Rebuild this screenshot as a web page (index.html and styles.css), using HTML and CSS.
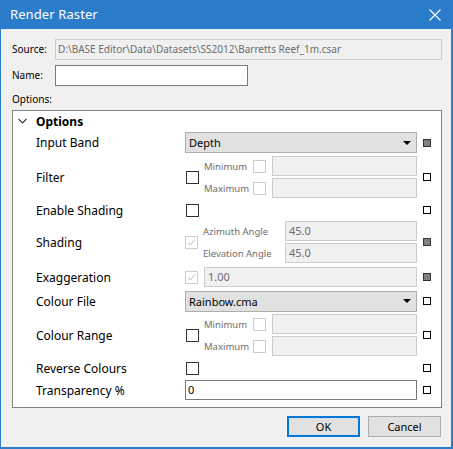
FILE: index.html
```html
<!DOCTYPE html>
<html>
<head>
<meta charset="utf-8">
<link rel="stylesheet" href="styles.css">
</head>
<body>
<div class="window">
  <div class="titlebar">
    <span class="title">Render Raster</span>
    <svg class="close" width="12" height="12" viewBox="0 0 12 12"><path d="M0.5 0.5 L11.5 11.5 M11.5 0.5 L0.5 11.5" stroke="#fff" stroke-width="1.1" fill="none"/></svg>
  </div>
  <div class="content">
    <div class="field-row">
      <span class="lbl">Source:</span>
      <div class="source">D:\BASE Editor\Data\Datasets\SS2012\Barretts Reef_1m.csar</div>
    </div>
    <div class="field-row">
      <span class="lbl">Name:</span>
      <div class="name"></div>
    </div>
    <div class="options-lbl">Options:</div>
    <div class="panel">
      <div class="panel-head">
        <svg class="chev" width="9" height="6" viewBox="0 0 9 6"><path d="M0.5 0.8 L4.5 4.8 L8.5 0.8" stroke="#333" stroke-width="1.2" fill="none"/></svg>
        <span>Options</span>
      </div>
      <div class="grid">
        <div class="plabel r-input">Input Band</div>
        <div class="ctl r-input"><div class="dropdown"><span>Depth</span><span class="arrow"></span></div></div>
        <div class="ind filled"></div>

        <div class="plabel r-filter">Filter</div>
        <div class="ctl r-filter">
          <div class="cb"></div>
          <div class="sub">
            <div class="subrow"><span class="slbl">Minimum</span><span class="cb dis"></span><div class="dfield"></div></div>
            <div class="subrow"><span class="slbl">Maximum</span><span class="cb dis"></span><div class="dfield"></div></div>
          </div>
        </div>
        <div class="ind"></div>

        <div class="plabel r-enable">Enable Shading</div>
        <div class="ctl r-enable"><div class="cb"></div></div>
        <div class="ind"></div>

        <div class="plabel r-shading">Shading</div>
        <div class="ctl r-shading">
          <div class="cb dis checked"><svg width="11" height="11" viewBox="0 0 11 11"><path d="M2 5.5 L4.3 8 L9 2.5" stroke="#b9b9b9" stroke-width="1" fill="none"/></svg></div>
          <div class="sub">
            <div class="subrow"><span class="slbl wide">Azimuth Angle</span><div class="dfield">45.0</div></div>
            <div class="subrow"><span class="slbl wide">Elevation Angle</span><div class="dfield">45.0</div></div>
          </div>
        </div>
        <div class="ind filled"></div>

        <div class="plabel r-exag">Exaggeration</div>
        <div class="ctl r-exag">
          <div class="cb dis checked"><svg width="11" height="11" viewBox="0 0 11 11"><path d="M2 5.5 L4.3 8 L9 2.5" stroke="#b9b9b9" stroke-width="1" fill="none"/></svg></div>
          <div class="dfield exag">1.00</div>
        </div>
        <div class="ind filled"></div>

        <div class="plabel r-colour">Colour File</div>
        <div class="ctl r-colour"><div class="dropdown"><span>Rainbow.cma</span><span class="arrow"></span></div></div>
        <div class="ind"></div>

        <div class="plabel r-range">Colour Range</div>
        <div class="ctl r-range">
          <div class="cb"></div>
          <div class="sub">
            <div class="subrow"><span class="slbl">Minimum</span><span class="cb dis"></span><div class="dfield"></div></div>
            <div class="subrow"><span class="slbl">Maximum</span><span class="cb dis"></span><div class="dfield"></div></div>
          </div>
        </div>
        <div class="ind"></div>

        <div class="plabel r-reverse">Reverse Colours</div>
        <div class="ctl r-reverse"><div class="cb"></div></div>
        <div class="ind"></div>

        <div class="plabel r-trans">Transparency %</div>
        <div class="ctl r-trans"><div class="tfield">0</div></div>
        <div class="ind"></div>
      </div>
    </div>
    <div class="buttons">
      <div class="btn ok">OK</div>
      <div class="btn">Cancel</div>
    </div>
  </div>
</div>
</body>
</html>
```

FILE: styles.css
```css
html, body {
  margin: 0;
  padding: 0;
  background: #f0f0f0;
}
body {
  width: 453px;
  height: 449px;
  overflow: hidden;
  font-family: "Noto Sans", "Open Sans", sans-serif;
  color: #000;
}
.window {
  box-sizing: border-box;
  width: 453px;
  height: 449px;
  border-left: 1px solid #2b7dcc;
  border-right: 2px solid #2b7dcc;
  border-bottom: 2px solid #2b7dcc;
  background: #f0f0f0;
}
.titlebar {
  height: 29px;
  background: #2b7dcc;
  display: flex;
  align-items: center;
  justify-content: space-between;
  padding: 0 10px 0 9px;
}
.title {
  color: #fff;
  font-size: 13px;
  letter-spacing: 0.1px;
  margin-top: -1px;
}
.content {
  padding: 10px 9px 0 11px;
}
.field-row {
  display: flex;
  align-items: center;
  height: 20px;
  margin-bottom: 6px;
}
.lbl {
  width: 43px;
  font-size: 10px;
  color: #000;
}
.source {
  box-sizing: border-box;
  width: 387px;
  height: 21px;
  border: 1px solid #cccccc;
  background: #f0f0f0;
  color: #6d6d6d;
  font-size: 10px;
  line-height: 19px;
  padding-left: 2px;
  white-space: nowrap;
}
.name {
  box-sizing: border-box;
  width: 193px;
  height: 21px;
  border: 1px solid #7a7a7a;
  background: #fff;
}
.options-lbl {
  font-size: 10px;
  height: 19px;
  line-height: 16px;
}
.panel {
  box-sizing: border-box;
  width: 430px;
  height: 298px;
  border: 1px solid #828282;
  background: #fff;
}
.panel-head {
  display: flex;
  align-items: center;
  height: 20px;
  font-size: 12px;
  font-weight: bold;
}
.chev {
  margin: 0 9px 0 5px;
}
.grid {
  display: grid;
  grid-template-columns: 143px 232px 8px;
  column-gap: 6px;
  padding-left: 23px;
}
.plabel {
  font-size: 12px;
  display: flex;
  align-items: center;
}
.ctl {
  display: flex;
  align-items: center;
}
.grid .ind {
  align-self: center;
  box-sizing: border-box;
  width: 8px;
  height: 8px;
  border: 1px solid #000;
  background: #fff;
}
.grid .ind.filled {
  background: #808080;
  border-color: #333;
}
.r-input { height: 23px; }
.r-filter { height: 46px; }
.r-enable { height: 20px; }
.r-shading { height: 44px; }
.r-exag { height: 26px; }
.r-colour { height: 22px; }
.r-range { height: 46px; }
.r-reverse { height: 20px; }
.r-trans { height: 24px; }

.dropdown {
  box-sizing: border-box;
  width: 232px;
  height: 21px;
  border: 1px solid #adadad;
  background: #e1e1e1;
  display: flex;
  align-items: center;
  justify-content: space-between;
  padding: 0 5px 0 3px;
  font-size: 11px;
}
.arrow {
  width: 0;
  height: 0;
  border-left: 4px solid transparent;
  border-right: 4px solid transparent;
  border-top: 4px solid #000;
}
.cb {
  box-sizing: border-box;
  width: 13px;
  height: 13px;
  border: 1px solid #333;
  background: #fff;
  flex: none;
  margin-left: 1px;
}
.cb.dis {
  border-color: #cccccc;
  margin-left: 0;
}
.cb.checked {
  display: flex;
  align-items: center;
  justify-content: center;
  margin-left: 0;
}
.sub {
  display: flex;
  flex-direction: column;
  gap: 2px;
  margin-left: 5px;
  flex: 1;
}
.subrow {
  display: flex;
  align-items: center;
  height: 20px;
}
.slbl {
  font-size: 9.5px;
  color: #6d6d6d;
  width: 49px;
}
.slbl.wide {
  width: 82px;
}
.dfield {
  box-sizing: border-box;
  flex: 1;
  height: 20px;
  border: 1px solid #cccccc;
  background: #f0f0f0;
  color: #6d6d6d;
  font-size: 11px;
  line-height: 18px;
  padding-left: 3px;
}
.subrow .cb.dis + .dfield {
  margin-left: 6px;
}
.dfield.exag {
  margin-left: 6px;
  height: 20px;
}
.tfield {
  box-sizing: border-box;
  width: 232px;
  height: 20px;
  border: 1px solid #7a7a7a;
  background: #fff;
  font-size: 11px;
  line-height: 18px;
  padding-left: 2px;
}
.buttons {
  display: flex;
  justify-content: flex-end;
  gap: 8px;
  margin-top: 8px;
  padding-right: 1px;
}
.btn {
  box-sizing: border-box;
  width: 73px;
  height: 21px;
  border: 1px solid #adadad;
  background: #e1e1e1;
  font-size: 11px;
  display: flex;
  align-items: center;
  justify-content: center;
}
.btn.ok {
  border: 2px solid #0078d7;
}
```
